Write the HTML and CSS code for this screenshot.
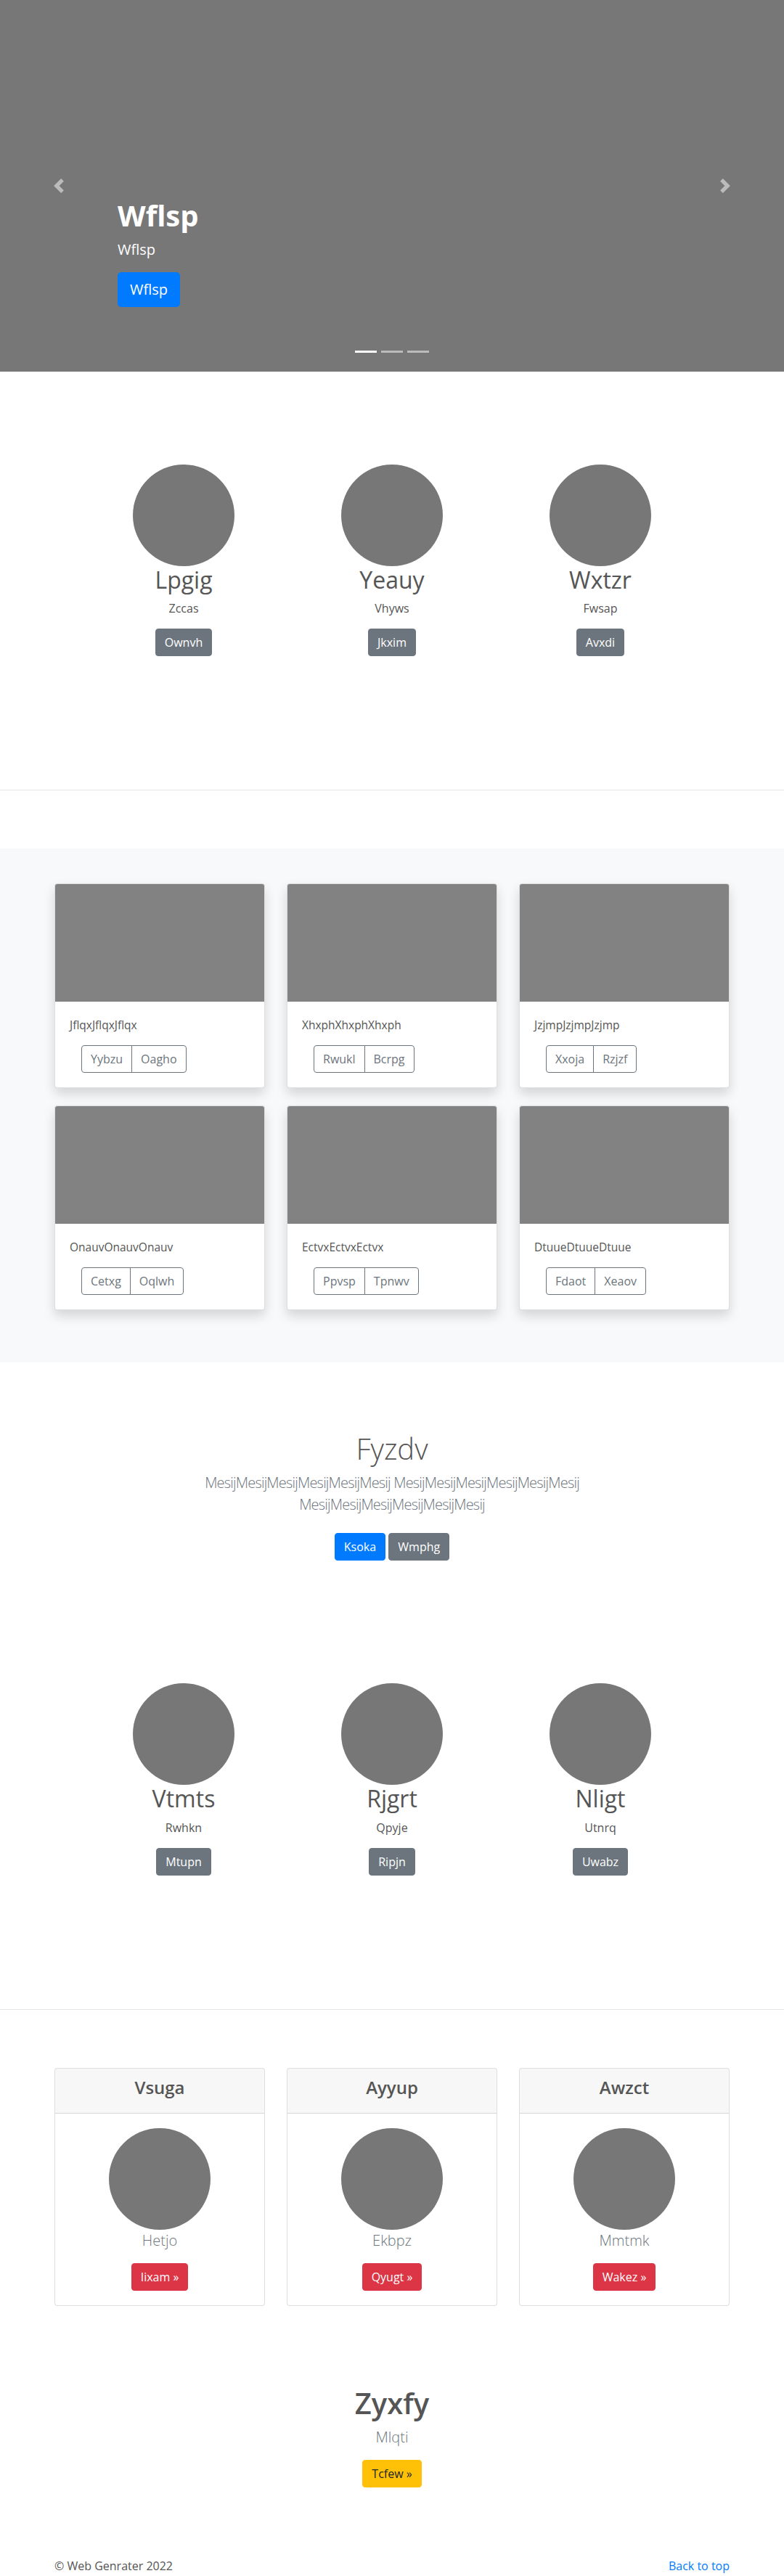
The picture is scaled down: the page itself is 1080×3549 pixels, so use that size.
FILE: index.html
```html
<!DOCTYPE html>
<html lang="en">
<head>
<meta charset="utf-8">
<title>Web Genrater</title>
<link rel="stylesheet" href="styles.css">
</head>
<body>
<header class="hero">
  <a class="hero-ctrl hero-ctrl-prev" href="#"><svg width="20" height="20" viewBox="0 0 8 8"><path d="M5.25 0l-4 4 4 4 1.5-1.5L4.25 4l2.5-2.5L5.25 0z"/></svg></a>
  <div class="hero-caption">
    <h1 class="hero-title">Wflsp</h1>
    <p class="hero-sub">Wflsp</p>
    <p class="hero-actions"><a class="btn btn-lg btn-primary" href="#">Wflsp</a></p>
  </div>
  <a class="hero-ctrl hero-ctrl-next" href="#"><svg width="20" height="20" viewBox="0 0 8 8"><path d="M2.75 0l-1.5 1.5L3.75 4l-2.5 2.5L2.75 8l4-4-4-4z"/></svg></a>
  <ol class="hero-dots"><li class="dot dot-active"></li><li class="dot"></li><li class="dot"></li></ol>
</header>

<section class="marketing marketing-first">
  <div class="trio">
    <div class="feature">
      <div class="avatar"></div>
      <h2 class="feature-name">Lpgig</h2>
      <p class="feature-sub">Zccas</p>
      <a class="btn btn-secondary" href="#">Ownvh</a>
    </div>
    <div class="feature">
      <div class="avatar"></div>
      <h2 class="feature-name">Yeauy</h2>
      <p class="feature-sub">Vhyws</p>
      <a class="btn btn-secondary" href="#">Jkxim</a>
    </div>
    <div class="feature">
      <div class="avatar"></div>
      <h2 class="feature-name">Wxtzr</h2>
      <p class="feature-sub">Fwsap</p>
      <a class="btn btn-secondary" href="#">Avxdi</a>
    </div>
  </div>
</section>

<hr class="divider">

<section class="album">
  <div class="grid3">
    <div class="card">
      <div class="card-img"></div>
      <div class="card-body">
        <p class="card-text">JflqxJflqxJflqx</p>
        <div class="btn-group"><a class="btn btn-outline" href="#">Yybzu</a><a class="btn btn-outline" href="#">Oagho</a></div>
      </div>
    </div>
    <div class="card">
      <div class="card-img"></div>
      <div class="card-body">
        <p class="card-text">XhxphXhxphXhxph</p>
        <div class="btn-group"><a class="btn btn-outline" href="#">Rwukl</a><a class="btn btn-outline" href="#">Bcrpg</a></div>
      </div>
    </div>
    <div class="card">
      <div class="card-img"></div>
      <div class="card-body">
        <p class="card-text">JzjmpJzjmpJzjmp</p>
        <div class="btn-group"><a class="btn btn-outline" href="#">Xxoja</a><a class="btn btn-outline" href="#">Rzjzf</a></div>
      </div>
    </div>
    <div class="card">
      <div class="card-img"></div>
      <div class="card-body">
        <p class="card-text">OnauvOnauvOnauv</p>
        <div class="btn-group"><a class="btn btn-outline" href="#">Cetxg</a><a class="btn btn-outline" href="#">Oqlwh</a></div>
      </div>
    </div>
    <div class="card">
      <div class="card-img"></div>
      <div class="card-body">
        <p class="card-text">EctvxEctvxEctvx</p>
        <div class="btn-group"><a class="btn btn-outline" href="#">Ppvsp</a><a class="btn btn-outline" href="#">Tpnwv</a></div>
      </div>
    </div>
    <div class="card">
      <div class="card-img"></div>
      <div class="card-body">
        <p class="card-text">DtuueDtuueDtuue</p>
        <div class="btn-group"><a class="btn btn-outline" href="#">Fdaot</a><a class="btn btn-outline" href="#">Xeaov</a></div>
      </div>
    </div>
  </div>
</section>

<section class="jumbo">
  <div class="jumbo-inner">
    <h1 class="jumbo-title">Fyzdv</h1>
    <p class="lead muted lead-tight">MesijMesijMesijMesijMesijMesij MesijMesijMesijMesijMesijMesij MesijMesijMesijMesijMesijMesij</p>
    <p class="jumbo-actions"><a class="btn btn-primary btn-my" href="#">Ksoka</a> <a class="btn btn-secondary btn-my" href="#">Wmphg</a></p>
  </div>
</section>

<section class="marketing marketing-second">
  <div class="trio">
    <div class="feature">
      <div class="avatar"></div>
      <h2 class="feature-name">Vtmts</h2>
      <p class="feature-sub">Rwhkn</p>
      <a class="btn btn-secondary" href="#">Mtupn</a>
    </div>
    <div class="feature">
      <div class="avatar"></div>
      <h2 class="feature-name">Rjgrt</h2>
      <p class="feature-sub">Qpyje</p>
      <a class="btn btn-secondary" href="#">Ripjn</a>
    </div>
    <div class="feature">
      <div class="avatar"></div>
      <h2 class="feature-name">Nligt</h2>
      <p class="feature-sub">Utnrq</p>
      <a class="btn btn-secondary" href="#">Uwabz</a>
    </div>
  </div>
</section>

<hr class="divider">

<section class="pricing">
  <div class="grid3">
    <div class="pcard">
      <div class="pcard-head"><h4 class="pcard-title">Vsuga</h4></div>
      <div class="pcard-body">
        <div class="avatar"></div>
        <p class="lead muted">Hetjo</p>
        <a class="btn btn-danger" href="#">Iixam &raquo;</a>
      </div>
    </div>
    <div class="pcard">
      <div class="pcard-head"><h4 class="pcard-title">Ayyup</h4></div>
      <div class="pcard-body">
        <div class="avatar"></div>
        <p class="lead muted">Ekbpz</p>
        <a class="btn btn-danger" href="#">Qyugt &raquo;</a>
      </div>
    </div>
    <div class="pcard">
      <div class="pcard-head"><h4 class="pcard-title">Awzct</h4></div>
      <div class="pcard-body">
        <div class="avatar"></div>
        <p class="lead muted">Mmtmk</p>
        <a class="btn btn-danger" href="#">Wakez &raquo;</a>
      </div>
    </div>
  </div>
</section>

<section class="cta">
  <h1 class="cta-title">Zyxfy</h1>
  <p class="lead muted">Mlqti</p>
  <a class="btn btn-warning" href="#">Tcfew &raquo;</a>
</section>

<footer class="footer">
  <p class="footer-copy">&copy; Web Genrater 2022</p>
  <a class="footer-link" href="#">Back to top</a>
</footer>
</body>
</html>
```
FILE: styles.css
```css
* { box-sizing: border-box; }
html, body { margin: 0; padding: 0; }
body {
  font-family: "Segoe UI", "Open Sans", "Noto Sans", sans-serif;
  font-size: 16px;
  line-height: 1.5;
  color: #555;
  background: #fff;
}
h1, h2, h4, p { margin: 0; }
a { text-decoration: none; }

/* buttons */
.btn {
  display: inline-block;
  font-size: 16px;
  line-height: 24px;
  padding: 6px 12px;
  border: 1px solid transparent;
  border-radius: 4px;
  color: #fff;
  white-space: nowrap;
}
.btn-lg { font-size: 20px; line-height: 30px; padding: 8px 16px; border-radius: 4.8px; }
.btn-primary { background: #007bff; border-color: #007bff; }
.btn-secondary { background: #6c757d; border-color: #6c757d; }
.btn-danger { background: #dc3545; border-color: #dc3545; }
.btn-warning { background: #ffc107; border-color: #ffc107; color: #212529; }
.btn-outline { background: transparent; border-color: #6c757d; color: #6c757d; }
.btn-my { margin: 8px 0; }

/* hero */
.hero {
  position: relative;
  height: 512px;
  background: #777;
  display: flex;
  flex-direction: column;
  justify-content: flex-end;
  padding: 0 162px 73px;
  color: #fff;
}
.hero-title { font-size: 40px; line-height: 48px; font-weight: 700; margin-bottom: 8px; }
.hero-sub { font-size: 20px; line-height: 30px; margin-bottom: 16px; }
.hero-actions { margin-bottom: 16px; line-height: 24px; }
.hero-ctrl {
  position: absolute;
  top: 0;
  bottom: 0;
  width: 162px;
  display: flex;
  align-items: center;
  justify-content: center;
  opacity: .5;
}
.hero-ctrl svg { fill: #fff; display: block; }
.hero-ctrl-prev { left: 0; }
.hero-ctrl-next { right: 0; }
.hero-dots {
  position: absolute;
  left: 0;
  right: 0;
  bottom: 26px;
  margin: 0;
  padding: 0;
  list-style: none;
  display: flex;
  justify-content: center;
  gap: 6px;
}
.dot { width: 30px; height: 3px; background: #fff; opacity: .5; }
.dot-active { opacity: 1; }

/* marketing */
.marketing { padding-bottom: 104px; }
.marketing-first { padding-top: 128px; }
.marketing-second { padding-top: 113px; }
.trio {
  display: grid;
  grid-template-columns: repeat(3, 287px);
  justify-content: center;
}
.feature { display: flex; flex-direction: column; align-items: center; text-align: center; }
.avatar { width: 140px; height: 140px; border-radius: 50%; background: #777; }
.feature-name { font-size: 32px; line-height: 38.4px; font-weight: 400; margin-bottom: 8px; }
.feature-sub { margin-bottom: 16px; }

.divider { margin: 80px 0; border: 0; border-top: 1px solid rgba(0,0,0,.1); height: 0; }

/* album */
.album { background: #f8f9fa; padding: 48px 0 72px; }
.grid3 {
  width: 930px;
  margin: 0 auto;
  display: grid;
  grid-template-columns: repeat(3, 290px);
  column-gap: 30px;
  row-gap: 24px;
}
.card {
  background: #fff;
  border: 1px solid rgba(0,0,0,.125);
  border-radius: 4px;
  overflow: hidden;
  box-shadow: 0 8px 16px rgba(0,0,0,.15);
}
.card-img { height: 162px; background: #828282; }
.card-body { padding: 20px; }
.card-text { font-size: 15.5px; line-height: 24px; margin-bottom: 16px; }
.btn-group { display: inline-flex; margin-left: 16px; }
.btn-group .btn:first-child { border-top-right-radius: 0; border-bottom-right-radius: 0; }
.btn-group .btn + .btn { margin-left: -1px; border-top-left-radius: 0; border-bottom-left-radius: 0; }

/* jumbotron */
.jumbo { padding: 95px 0 48px; text-align: center; }
.jumbo-inner { width: 640px; margin: 0 auto; padding: 0 15px; }
.jumbo-title { font-size: 40px; line-height: 48px; font-weight: 300; margin-bottom: 8px; }
.lead { font-size: 20px; line-height: 30px; font-weight: 300; margin-bottom: 16px; }
.lead-tight { letter-spacing: -0.8px; }
.muted { color: #6c757d; }

/* pricing */
.pcard {
  border: 1px solid rgba(0,0,0,.125);
  border-radius: 4px;
  background: #fff;
  overflow: hidden;
}
.pcard-head {
  background: rgba(0,0,0,.03);
  border-bottom: 1px solid rgba(0,0,0,.125);
  padding: 12px 20px;
  text-align: center;
}
.pcard-title { font-size: 24px; line-height: 28.8px; font-weight: 600; margin-bottom: 8px; }
.pcard-body { padding: 20px; display: flex; flex-direction: column; align-items: center; text-align: center; }

/* cta */
.cta { padding-top: 110px; display: flex; flex-direction: column; align-items: center; text-align: center; }
.cta-title { font-size: 40px; line-height: 48px; font-weight: 600; margin-bottom: 8px; }

/* footer */
.footer {
  width: 930px;
  margin: 0 auto;
  padding-top: 96px;
  display: flex;
  justify-content: space-between;
}
.footer-link { color: #007bff; }
```
